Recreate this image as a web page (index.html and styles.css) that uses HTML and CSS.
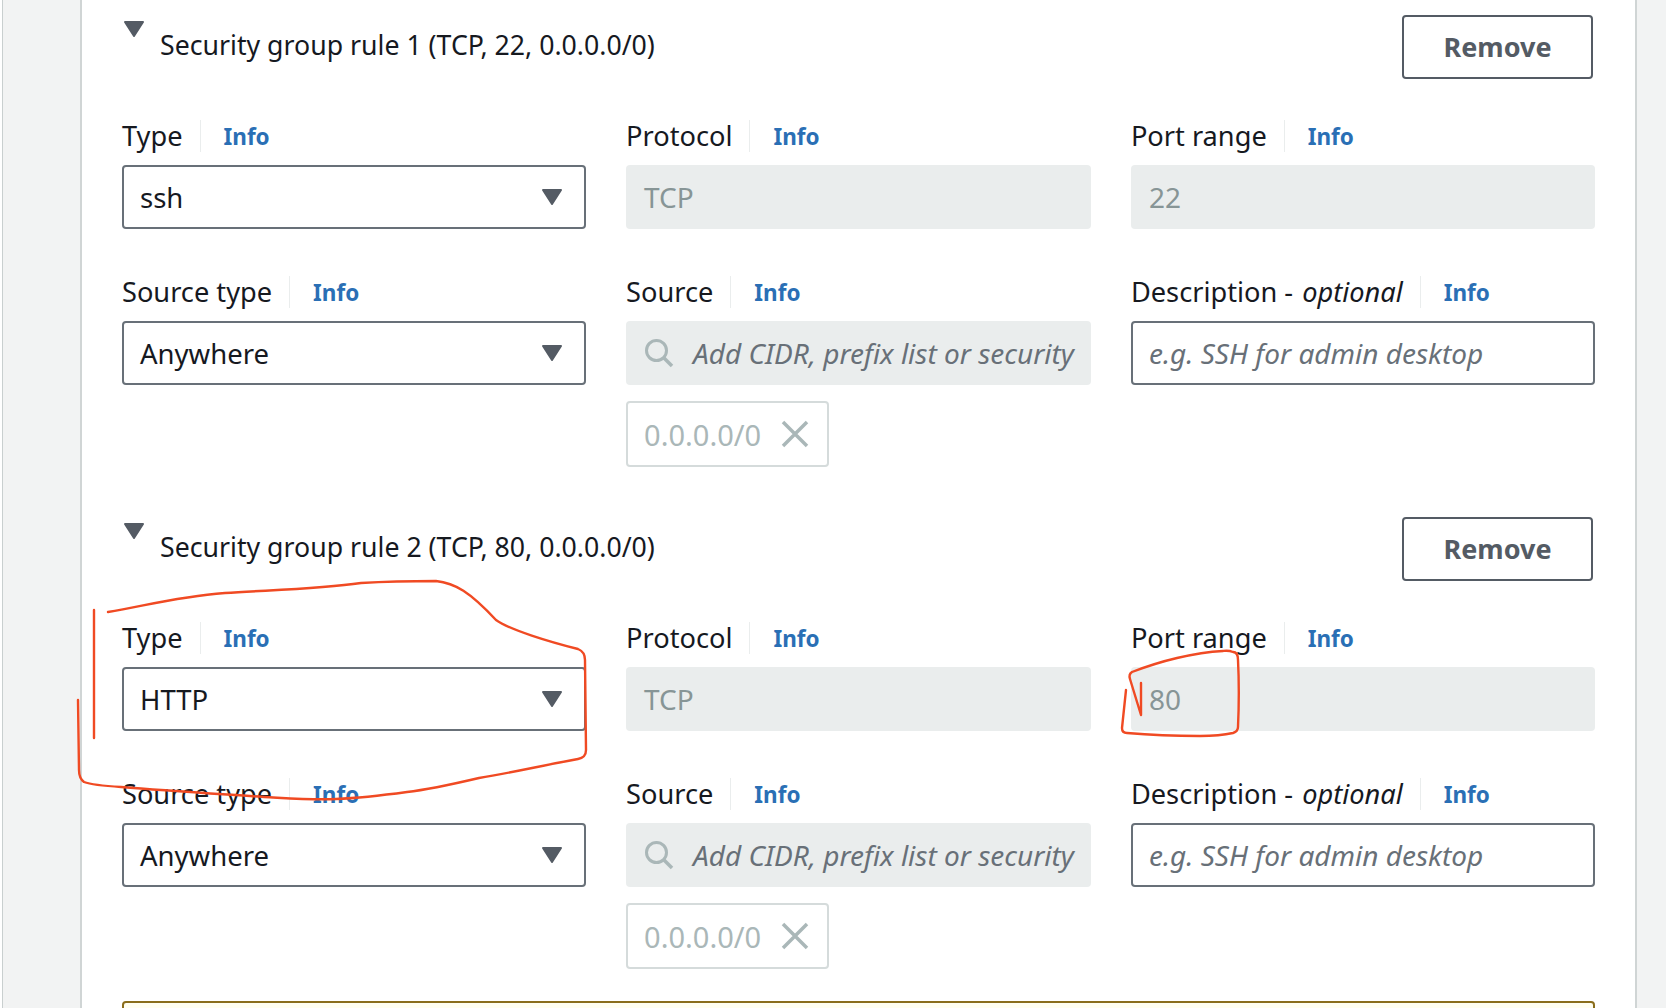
FILE: index.html
```html
<!DOCTYPE html>
<html lang="en">
<head>
    <meta charset="UTF-8">
    <title>Security group rules</title>
    <link rel="stylesheet" href="styles.css">
</head>
<body>
<div class="page">
    <div class="gutter-left"></div>
    <main class="panel">
        <section class="rule">
            <div class="rule-head">
                <svg class="rule-caret" width="22" height="18" viewBox="0 0 22 18"><path d="M2 2h18l-9 14z" fill="#545b64" stroke="#545b64" stroke-width="2" stroke-linejoin="round"/></svg>
                <h2 class="rule-title">Security group rule 1 (TCP, 22, 0.0.0.0/0)</h2>
                <button class="btn-remove">Remove</button>
            </div>
            <div class="fields">
                <div class="field">
                    <div class="label"><span class="label-text">Type</span><a class="info">Info</a></div>
                    <div class="control select"><span>ssh</span><svg class="select-caret" width="22" height="18" viewBox="0 0 22 18"><path d="M2 2h18l-9 14z" fill="#545b64" stroke="#545b64" stroke-width="2" stroke-linejoin="round"/></svg></div>
                </div>
                <div class="field">
                    <div class="label"><span class="label-text">Protocol</span><a class="info">Info</a></div>
                    <div class="control disabled">TCP</div>
                </div>
                <div class="field">
                    <div class="label"><span class="label-text">Port range</span><a class="info">Info</a></div>
                    <div class="control disabled">22</div>
                </div>
                <div class="field">
                    <div class="label"><span class="label-text">Source type</span><a class="info">Info</a></div>
                    <div class="control select"><span>Anywhere</span><svg class="select-caret" width="22" height="18" viewBox="0 0 22 18"><path d="M2 2h18l-9 14z" fill="#545b64" stroke="#545b64" stroke-width="2" stroke-linejoin="round"/></svg></div>
                </div>
                <div class="field">
                    <div class="label"><span class="label-text">Source</span><a class="info">Info</a></div>
                    <div class="control disabled search">
                        <svg class="search-icon" width="30" height="30" viewBox="0 0 30 30"><circle cx="12.5" cy="12.5" r="10" fill="none" stroke="#aab7b8" stroke-width="3"/><path d="M20 20l8 8" stroke="#aab7b8" stroke-width="3.5"/></svg>
                        <span class="placeholder">Add CIDR, prefix list or security</span>
                    </div>
                    <div class="chip"><span>0.0.0.0/0</span><svg width="28" height="28" viewBox="0 0 28 28"><path d="M2 2l24 24M26 2L2 26" stroke="#aab7b8" stroke-width="3.5"/></svg></div>
                </div>
                <div class="field">
                    <div class="label"><span class="label-text">Description - <em>optional</em></span><a class="info">Info</a></div>
                    <div class="control text"><span class="placeholder">e.g. SSH for admin desktop</span></div>
                </div>
            </div>
        </section>
        <section class="rule">
            <div class="rule-head">
                <svg class="rule-caret" width="22" height="18" viewBox="0 0 22 18"><path d="M2 2h18l-9 14z" fill="#545b64" stroke="#545b64" stroke-width="2" stroke-linejoin="round"/></svg>
                <h2 class="rule-title">Security group rule 2 (TCP, 80, 0.0.0.0/0)</h2>
                <button class="btn-remove">Remove</button>
            </div>
            <div class="fields">
                <div class="field">
                    <div class="label"><span class="label-text">Type</span><a class="info">Info</a></div>
                    <div class="control select"><span>HTTP</span><svg class="select-caret" width="22" height="18" viewBox="0 0 22 18"><path d="M2 2h18l-9 14z" fill="#545b64" stroke="#545b64" stroke-width="2" stroke-linejoin="round"/></svg></div>
                </div>
                <div class="field">
                    <div class="label"><span class="label-text">Protocol</span><a class="info">Info</a></div>
                    <div class="control disabled">TCP</div>
                </div>
                <div class="field">
                    <div class="label"><span class="label-text">Port range</span><a class="info">Info</a></div>
                    <div class="control disabled">80</div>
                </div>
                <div class="field">
                    <div class="label"><span class="label-text">Source type</span><a class="info">Info</a></div>
                    <div class="control select"><span>Anywhere</span><svg class="select-caret" width="22" height="18" viewBox="0 0 22 18"><path d="M2 2h18l-9 14z" fill="#545b64" stroke="#545b64" stroke-width="2" stroke-linejoin="round"/></svg></div>
                </div>
                <div class="field">
                    <div class="label"><span class="label-text">Source</span><a class="info">Info</a></div>
                    <div class="control disabled search">
                        <svg class="search-icon" width="30" height="30" viewBox="0 0 30 30"><circle cx="12.5" cy="12.5" r="10" fill="none" stroke="#aab7b8" stroke-width="3"/><path d="M20 20l8 8" stroke="#aab7b8" stroke-width="3.5"/></svg>
                        <span class="placeholder">Add CIDR, prefix list or security</span>
                    </div>
                    <div class="chip"><span>0.0.0.0/0</span><svg width="28" height="28" viewBox="0 0 28 28"><path d="M2 2l24 24M26 2L2 26" stroke="#aab7b8" stroke-width="3.5"/></svg></div>
                </div>
                <div class="field">
                    <div class="label"><span class="label-text">Description - <em>optional</em></span><a class="info">Info</a></div>
                    <div class="control text"><span class="placeholder">e.g. SSH for admin desktop</span></div>
                </div>
            </div>
        </section>
        <div class="alert"></div>
    </main>
    <div class="gutter-right"></div>
    <!-- hand drawn marks on top of the screenshot -->
    <svg class="marks" width="1666" height="1008" viewBox="0 0 1666 1008" fill="none" stroke="#f04a23" stroke-width="2.4" stroke-linecap="round" stroke-linejoin="round">
        <path d="M94 610V738"/>
        <path d="M108 612C145 606 175 597 225 593C270 590 320 589 361 583C395 581 420 581 436 581C455 583 470 592 496 620C510 630 550 642 578 649C583 651 585 654 585 660L586 750C586 756 583 758 578 759C540 766 510 773 479 778C445 786 425 790 407 792C385 795 360 798 336 799C310 800 285 798 264 797C220 794 170 791 121 787C105 786 92 785 84 782C80 779 79 775 79 770L78 700"/>
        <path d="M1126 690L1122 728C1122 731 1124 733 1127 733C1150 735 1175 736 1200 736C1212 736 1224 735 1233 733C1236 732 1238 730 1238 727C1239 705 1239 680 1238 660C1238 655 1236 652 1233 652C1228 650 1224 651 1223 651C1205 652 1190 655 1177 658C1160 662 1145 667 1132 672C1129 674 1129 676 1130 679L1141 715L1141 683"/>
    </svg>
</div>
</body>
</html>
```

FILE: styles.css
```css
body {
    margin: 0;
    font-family: "Noto Sans", Arial, sans-serif;
    color: #16191f;
    background-color: #fff;
    overflow: hidden;
}

.page {
    position: relative;
    display: flex;
    height: 1008px;
    overflow: hidden;
    padding-left: 2px;
}

.gutter-left {
    box-sizing: border-box;
    width: 78px;
    flex-shrink: 0;
    background-color: #f2f3f3;
    border-left: 1px solid #c9cfcf;
}

.gutter-right {
    flex: 1;
    background-color: #f2f3f3;
}

.panel {
    box-sizing: border-box;
    width: 1557px;
    flex-shrink: 0;
    padding: 15px 40px 0 40px;
    background-color: #fff;
    border-left: 2px solid #d0d5d5;
    border-right: 2px solid #d0d5d5;
}

.rule {
    margin-bottom: 50px;
}

.rule + .rule {
    margin-bottom: 32px;
}

.rule-head {
    display: flex;
    align-items: flex-start;
    height: 64px;
    margin-bottom: 41px;
}

.rule-caret {
    margin: 5px 15px 0 1px;
}

.rule-title {
    margin: 11px 0 0;
    font-size: 26.7px;
    font-weight: 400;
    line-height: 38px;
    color: #16191f;
}

.btn-remove {
    margin-left: auto;
    margin-right: 2px;
    width: 191px;
    height: 64px;
    padding-bottom: 3px;
    border: 2px solid #545b64;
    border-radius: 4px;
    background-color: #fff;
    color: #545b64;
    font-family: inherit;
    font-size: 27px;
    font-weight: 700;
}

.fields {
    display: grid;
    grid-template-columns: repeat(3, 1fr);
    column-gap: 40px;
    row-gap: 47px;
}

.label {
    display: flex;
    align-items: center;
    height: 32px;
    margin-bottom: 13px;
    font-size: 27.2px;
}

.label-text {
    padding-right: 17px;
    border-right: 1px solid #eaeded;
    line-height: 32px;
}

.label-text em {
    padding-left: 2px;
}

.info {
    margin-left: 23px;
    font-size: 22.5px;
    font-weight: 700;
    color: #2a6fb5;
}

.control {
    display: flex;
    align-items: center;
    box-sizing: border-box;
    height: 64px;
    padding: 0 17px;
    border-radius: 4px;
    font-size: 27.5px;
}

.select {
    justify-content: space-between;
    border: 2px solid #687078;
    padding-left: 16px;
    padding-right: 21px;
}

.disabled {
    background-color: #eaeded;
    color: #879596;
    padding-left: 18px;
    font-size: 28px;
}

.text {
    border: 2px solid #687078;
    padding-left: 16px;
}

.search-icon {
    margin-right: 19px;
    flex-shrink: 0;
}

.placeholder {
    font-size: 28px;
    font-style: italic;
    color: #687078;
    white-space: nowrap;
}

.chip {
    display: inline-flex;
    align-items: center;
    justify-content: space-between;
    box-sizing: border-box;
    width: 203px;
    height: 66px;
    margin-top: 16px;
    padding: 0 18px 0 16px;
    border: 2px solid #d5dbdb;
    border-radius: 4px;
    font-size: 29px;
    color: #aab7b8;
}

.alert {
    height: 40px;
    border: 2px solid #8a6d1b;
    border-radius: 4px;
    background-color: #fffef0;
}

.marks {
    position: absolute;
    left: 0;
    top: 0;
    pointer-events: none;
}
```
